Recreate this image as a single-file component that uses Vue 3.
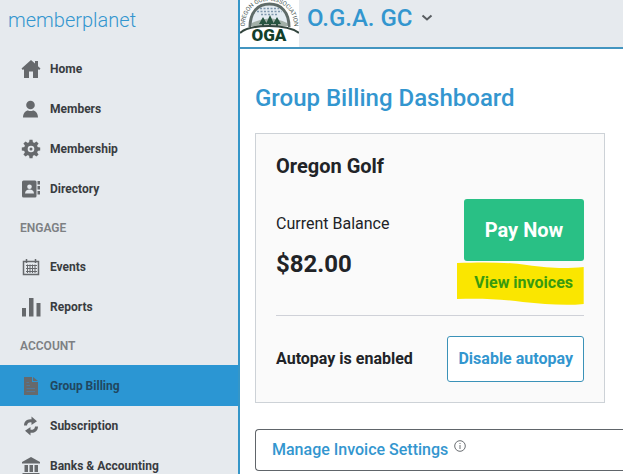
<script setup>
import { ref } from 'vue'

const sections = [
  {
    title: '',
    items: [
      { id: 'home', label: 'Home' },
      { id: 'members', label: 'Members' },
      { id: 'membership', label: 'Membership' },
      { id: 'directory', label: 'Directory' }
    ]
  },
  {
    title: 'ENGAGE',
    items: [
      { id: 'events', label: 'Events' },
      { id: 'reports', label: 'Reports' }
    ]
  },
  {
    title: 'ACCOUNT',
    items: [
      { id: 'billing', label: 'Group Billing' },
      { id: 'subscription', label: 'Subscription' },
      { id: 'banks', label: 'Banks & Accounting' }
    ]
  }
]

const active = ref('billing')
</script>

<template>
  <div class="shell">
    <aside class="sidebar">
      <a class="brand" href="#">memberplanet</a>

      <nav>
        <template v-for="section in sections" :key="section.title">
          <h2 v-if="section.title" class="section-title">{{ section.title }}</h2>
          <a
            v-for="item in section.items"
            :key="item.id"
            href="#"
            class="nav-item"
            :class="{ active: item.id === active }"
            @click.prevent="active = item.id"
          >
            <svg class="nav-icon" viewBox="0 0 20 20" aria-hidden="true">
              <path
                v-if="item.id === 'home'"
                d="M10 1L0.5 9.5L1.8 11L3 10.2V19H8V12.5H12V19H17V10.2L18.2 11L19.5 9.5L17 7.2V2H14V4.5Z"
              />
              <template v-else-if="item.id === 'members'">
                <circle cx="9.5" cy="6" r="4.3" />
                <path d="M2 18.5C2 14 5 11.5 7 11.5Q9.5 12.5 12 11.5C14 11.5 17 14 17 18.5Z" />
              </template>
              <template v-else-if="item.id === 'membership'">
                <g v-for="angle in [0, 45, 90, 135]" :key="angle" :transform="`rotate(${angle} 10 10)`">
                  <path d="M8 4L8.5 0.8H11.5L12 4V16L11.5 19.2H8.5L8 16Z" />
                </g>
                <circle cx="10" cy="10" r="7" />
                <circle cx="10" cy="10" r="3.3" class="hole" />
                <circle cx="10" cy="10" r="1.5" />
              </template>
              <template v-else-if="item.id === 'directory'">
                <rect x="1" y="1.5" width="14.5" height="17" rx="1.5" />
                <rect x="16.5" y="2" width="2.5" height="3.5" />
                <rect x="16.5" y="7" width="2.5" height="3.5" />
                <rect x="16.5" y="12" width="2.5" height="3.5" />
                <circle cx="8.5" cy="7.7" r="2.3" class="hole" />
                <path class="hole" d="M4 14.5C4 12 6 10.6 8.5 10.6S13 12 13 14.5Z" />
              </template>
              <template v-else-if="item.id === 'events'">
                <path class="line" d="M2.5 4.5H17.5V17.5H2.5Z" />
                <path class="line" d="M5.5 2V6M14.5 2V6" />
                <path class="thin" d="M5 8.5H16M5 11.5H16M5 14.5H16M6.5 7.5V16M9 7.5V16M11.5 7.5V16M14 7.5V16" />
              </template>
              <template v-else-if="item.id === 'reports'">
                <rect x="1" y="11" width="4" height="8.5" />
                <rect x="8" y="1" width="4.5" height="18.5" />
                <rect x="15.5" y="6" width="4" height="13.5" />
              </template>
              <template v-else-if="item.id === 'billing'">
                <path d="M3 1H11V6H17V19H3Z" />
                <path d="M12 1L17 5H12Z" />
                <path class="fold" d="M5.5 6.5H8M5.5 9.5H9M5.5 12.5H14M5.5 15.5H14" />
              </template>
              <template v-else-if="item.id === 'subscription'">
                <path class="arrow" d="M4.5 9.5C4.5 5.8 8 3.8 12 5" />
                <path d="M10.5 0.5L16 5.2L10.5 9Z" />
                <path class="arrow" d="M15.500 10.500C15.5 14.2 12 16.2 8 15" />
                <path d="M9.5 11L4 14.8L9.5 19.5Z" />
              </template>
              <template v-else>
                <path d="M10 1L19 6V7.5H1V6Z" />
                <path d="M3.5 9H7V16H3.5ZM8.5 9H12V16H8.5ZM13.5 9H17V16H13.5ZM1.5 17H18.5V19H1.5Z" />
              </template>
            </svg>
            <span>{{ item.label }}</span>
          </a>
        </template>
      </nav>
    </aside>

    <div class="page">
      <header class="topbar">
        <svg class="club-logo" viewBox="0 0 59 47" role="img" aria-label="OGA">
          <defs>
            <path id="ring" d="M5 30C3 13 14 1 29 1S56 13 54 30" />
          </defs>
          <rect width="59" height="47" fill="#fff" />
          <path d="M10 27C10 12 18 4 29.5 4S49 12 49 27" fill="#e3ebf1" stroke="#5f6b68" stroke-width="3" />
          <path
            d="M20 8.500H39M17 11.500H42M21 14.500H38"
            fill="none"
            stroke="#7f97ad"
            stroke-width="1.500"
            stroke-dasharray="2 1.500"
          />
          <path d="M12 23Q29 14 47 23V29H12Z" fill="#a3b0a8" />
          <path
            d="M23 17L19 24H22V26H24V24H27ZM30 15L26 24H29V26H31V24H34ZM37 17L33 24H36V26H38V24H41Z"
            fill="#285440"
          />
          <path d="M11 26H48V30H11Z" fill="#fff" />
          <path d="M0 33Q8 26 29 26T59 33" fill="none" stroke="#34463f" stroke-width="2" />
          <text class="ring-text">
            <textPath href="#ring" startOffset="50%" text-anchor="middle">OREGON GOLF ASSOCIATION</textPath>
          </text>
          <text class="club-text" x="29" y="41" text-anchor="middle">OGA</text>
        </svg>
        <button class="group-switch" type="button">
          <span>O.G.A. GC</span>
          <svg class="chevron" viewBox="0 0 12 8" aria-hidden="true">
            <path d="M1.5 1.5L6 5.5L10.5 1.5" />
          </svg>
        </button>
      </header>

      <main class="content">
        <h1>Group Billing Dashboard</h1>

        <section class="card">
          <h3>Oregon Golf</h3>
          <div class="balance-row">
            <div class="balance">
              <p>Current Balance</p>
              <strong>$82.00</strong>
            </div>
            <div class="pay">
              <button class="pay-button" type="button">Pay Now</button>
              <a class="invoices" href="#">
                <svg class="marker" viewBox="0 0 127 43" preserveAspectRatio="none" aria-hidden="true">
                  <path d="M0 1C26 0 48 0 70 3C92 6 106 7 127 5V42C108 44 87 42 66 40C44 37 22 36 0 37Z" />
                </svg>
                <span>View invoices</span>
              </a>
            </div>
          </div>
          <div class="autopay-row">
            <span>Autopay is enabled</span>
            <button class="outline-button" type="button">Disable autopay</button>
          </div>
        </section>

        <section class="settings">
          <a href="#">Manage Invoice Settings</a>
          <svg class="info" viewBox="0 0 12 12" role="img" aria-label="Info">
            <circle cx="6" cy="6" r="5.3" />
            <path d="M6 5V9M6 3V4" />
          </svg>
        </section>
      </main>
    </div>
  </div>
</template>

<style>
body {
  background: #fff;
}
</style>

<style scoped>
.shell {
  display: flex;
  height: 100vh;
  overflow: hidden;
  padding-right: 3px;
  box-sizing: border-box;
  font-family: Roboto, "Liberation Sans", sans-serif;
  color: #212327;
}

h1, h2, h3, p {
  margin: 0;
}

a {
  text-decoration: none;
}

button {
  font-family: inherit;
  cursor: pointer;
}

.sidebar {
  flex: 0 0 238px;
  background: #e6eaee;
  border-right: 2px solid #3596c8;
}

.brand {
  display: block;
  padding: 5px 8px 14px;
  font-size: 20px;
  line-height: 30px;
  font-weight: 300;
  color: #3396cf;
}

.section-title {
  padding: 0 20px;
  font-size: 12px;
  line-height: 38px;
  font-weight: 600;
  color: #7d8083;
}

.nav-item {
  display: flex;
  align-items: center;
  gap: 9px;
  height: 40px;
  padding-left: 21px;
  font-size: 12px;
  font-weight: 700;
  color: #393c40;
}

.nav-item.active {
  height: 41px;
  background: #2b96d3;
  color: #21475f;
}

.nav-icon {
  width: 20px;
  height: 20px;
  fill: #66696c;
}

.nav-icon .hole {
  fill: #e6eaee;
}

.nav-icon .line,
.nav-icon .thin,
.nav-icon .arrow {
  fill: none;
  stroke: #66696c;
  stroke-width: 1.5;
}

.nav-icon .thin {
  stroke-width: 1;
}

.nav-icon .arrow {
  stroke-width: 3;
}

.nav-icon .fold {
  fill: none;
  stroke: #50789a;
}

.page {
  flex: 1;
  min-width: 0;
}

.topbar {
  display: flex;
  height: 47px;
  background: #e6eaee;
  border-bottom: 2px solid #4395c0;
}

.club-logo {
  width: 59px;
  height: 47px;
}

.ring-text {
  font-size: 6px;
  fill: #46534f;
}

.club-text {
  font-size: 17px;
  font-weight: 900;
  fill: #123f2b;
}

.group-switch {
  display: flex;
  align-items: center;
  align-self: flex-start;
  gap: 8px;
  padding: 0 8px;
  border: none;
  background: none;
  font-size: 24px;
  line-height: 36px;
  font-weight: 500;
  color: #3396cf;
}

.chevron {
  width: 12px;
  height: 8px;
  fill: none;
  stroke: #595d61;
  stroke-width: 2;
}

.content {
  padding: 33px 0 0 15px;
}

h1 {
  font-size: 24px;
  line-height: 32px;
  font-weight: 500;
  color: #3396cf;
}

.card {
  margin: 19px 18px 26px 0;
  padding: 20px;
  border: 1px solid #cdd2d7;
  background: #fafafa;
}

h3 {
  font-size: 20px;
  line-height: 24px;
  font-weight: 700;
}

.balance-row {
  display: flex;
  justify-content: space-between;
  padding: 21px 0 10px;
  border-bottom: 1px solid #cfd1d8;
}

.balance {
  padding-top: 13px;
}

.balance p {
  font-size: 16px;
  line-height: 24px;
}

.balance strong {
  display: block;
  margin-top: 12px;
  font-size: 24px;
  line-height: 32px;
}

.pay {
  display: flex;
  flex-direction: column;
  align-items: flex-end;
}

.pay-button {
  width: 120px;
  height: 62px;
  padding: 0;
  border: none;
  border-radius: 3px;
  background: #29c085;
  font-size: 20px;
  font-weight: 700;
  color: #fff;
}

.invoices {
  position: relative;
  padding: 10px 11px 10px 17px;
  font-size: 16px;
  line-height: 24px;
  font-weight: 700;
  color: #389a0e;
}

.invoices span {
  position: relative;
}

/* highlighter stroke behind the link */
.marker {
  position: absolute;
  top: 1px;
  left: 0;
  width: 100%;
  height: 43px;
  fill: #fae600;
}

.autopay-row {
  display: flex;
  align-items: center;
  justify-content: space-between;
  padding-top: 20px;
  font-size: 16px;
  line-height: 24px;
  font-weight: 700;
}

.outline-button {
  height: 46px;
  padding: 0 10px 2px;
  border: 1px solid #3b92b8;
  border-radius: 3px;
  background: #fff;
  font-size: 16px;
  font-weight: 700;
  color: #3396cf;
}

.settings {
  display: flex;
  gap: 6px;
  padding: 8px 16px;
  border: 1px solid #60656a;
  border-right: none;
  border-radius: 4px 0 0 4px;
}

.settings a {
  font-size: 16px;
  line-height: 24px;
  font-weight: 500;
  color: #3396cf;
}

.info {
  width: 12px;
  height: 12px;
  margin-top: 2px;
  fill: none;
  stroke: #6a6e72;
}
</style>
